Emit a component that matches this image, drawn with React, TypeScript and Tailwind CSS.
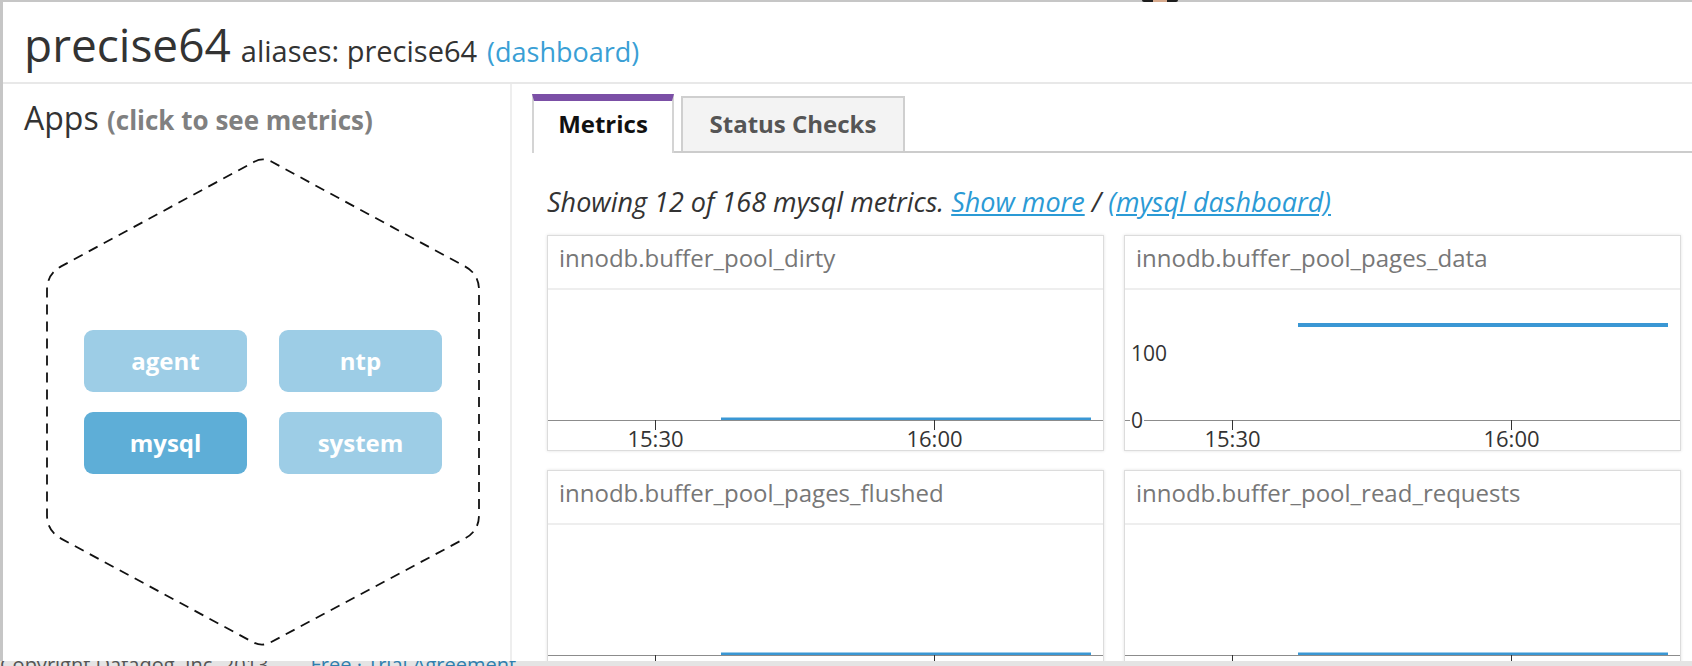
import React from "react";

type Pt = [number, number];

function roundedPoly(pts: Pt[], radii: number[]): string {
  const n = pts.length;
  let d = "";
  for (let i = 0; i < n; i++) {
    const p = pts[(i - 1 + n) % n];
    const c = pts[i];
    const nx = pts[(i + 1) % n];
    const l1 = Math.hypot(p[0] - c[0], p[1] - c[1]);
    const l2 = Math.hypot(nx[0] - c[0], nx[1] - c[1]);
    const r = radii[i];
    const a: Pt = [c[0] + ((p[0] - c[0]) / l1) * r, c[1] + ((p[1] - c[1]) / l1) * r];
    const b: Pt = [c[0] + ((nx[0] - c[0]) / l2) * r, c[1] + ((nx[1] - c[1]) / l2) * r];
    d += `${i === 0 ? "M" : "L"}${a[0].toFixed(1)} ${a[1].toFixed(1)} Q${c[0]} ${c[1]} ${b[0].toFixed(1)} ${b[1].toFixed(1)} `;
  }
  return d + "Z";
}

const HEX: Pt[] = [
  [263, 157],
  [479, 274],
  [479, 531],
  [262, 647],
  [47, 531],
  [47, 274],
];

function Hexagon() {
  return (
    <svg
      className="absolute left-0 top-0 pointer-events-none"
      width={509}
      height={577}
      viewBox="3 84 509 577"
    >
      <path
        d={roundedPoly(HEX, [10, 16, 16, 10, 16, 16])}
        fill="none"
        stroke="#111"
        strokeWidth={1.8}
        strokeDasharray="10 7"
      />
    </svg>
  );
}

function AppButton({ label, active }: { label: string; active?: boolean }) {
  return (
    <div
      className={
        "flex h-[62px] items-center justify-center rounded-[9px] text-[24px] font-bold text-white " +
        (active ? "bg-[#5eaed7]" : "bg-[#9dcde6]")
      }
    >
      {label}
    </div>
  );
}

type ChartProps = {
  title: string;
  lineY: number;
  lineW: number;
  yLabels?: boolean;
};

const SVG_FONT = "'Open Sans', sans-serif";

function Chart({ title, lineY, lineW, yLabels }: ChartProps) {
  const axis = 130;
  return (
    <div className="flex h-[216px] flex-col border border-[#dcdcdc] bg-white shadow-[0_0_3px_rgba(0,0,0,0.12)]">
      <div className="h-[54px] shrink-0 border-b-2 border-[#eeeeee] pl-[11px] pt-[7px] text-[24px] leading-[30px] text-[#777777]">
        {title}
      </div>
      <svg width={555} height={160} className="shrink-0 overflow-visible">
        <line x1={0} y1={axis + 0.5} x2={555} y2={axis + 0.5} stroke="#8c8c8c" strokeWidth={1} />
        <line x1={107.5} y1={axis} x2={107.5} y2={axis + 10} stroke="#333" strokeWidth={1} />
        <line x1={386.5} y1={axis} x2={386.5} y2={axis + 10} stroke="#333" strokeWidth={1} />
        <line x1={173} y1={lineY} x2={543} y2={lineY} stroke="#3a97d4" strokeWidth={lineW} />
        <text x={107.5} y={157} textAnchor="middle" fontSize={22} fill="#333" fontFamily={SVG_FONT}>
          15:30
        </text>
        <text x={386.5} y={157} textAnchor="middle" fontSize={22} fill="#333" fontFamily={SVG_FONT}>
          16:00
        </text>
        {yLabels && (
          <>
            <text x={6} y={71} fontSize={21} fill="#333" fontFamily={SVG_FONT}>
              100
            </text>
            <rect x={5} y={axis - 3} width={14} height={6} fill="#fff" />
            <text x={6} y={138} fontSize={21} fill="#333" fontFamily={SVG_FONT}>
              0
            </text>
          </>
        )}
      </svg>
    </div>
  );
}

export default function App() {
  return (
    <div className="relative h-[666px] w-[1692px] overflow-hidden bg-[#c6c6c6] font-['Open_Sans','Noto_Sans',sans-serif]">
      <div className="relative h-[2px] w-full">
        <div className="absolute left-[1142px] top-0 h-[2px] w-[36px] rounded-b-full bg-[#1e1e1e]">
          <div className="mx-auto h-[2px] w-[14px] bg-[#d6a98c]" />
        </div>
      </div>
      <div className="ml-[3px] flex h-[659px] flex-col overflow-hidden bg-white">
        {/* Header */}
        <div className="flex h-[82px] shrink-0 items-baseline border-b-2 border-[#e8e8e8] pl-[21px] pt-[16px] text-[#333333]">
          <span className="text-[46px] leading-[52px]">precise64</span>
          <span className="ml-[10px] text-[29px] leading-[36px]">aliases: precise64</span>
          <span className="ml-[10px] text-[27px] leading-[36px] text-[#3a9fd5]">(dashboard)</span>
        </div>
        {/* Body */}
        <div className="flex flex-1">
          {/* Left panel */}
          <div className="relative w-[509px] shrink-0 border-r-2 border-[#eeeeee]">
            <Hexagon />
            <div className="pl-[21px] pt-[14px] text-[32px] leading-[40px] text-[#333333]">
              Apps <span className="text-[26px] font-bold text-[#808080]">(click to see metrics)</span>
            </div>
            <div className="relative ml-[81px] mt-[190px] grid w-[358px] grid-cols-2 gap-x-[32px] gap-y-[20px]">
              <AppButton label="agent" />
              <AppButton label="ntp" />
              <AppButton label="mysql" active />
              <AppButton label="system" />
            </div>
          </div>
          {/* Right panel */}
          <div className="min-w-0 flex-1 pl-[20px] pt-[10px]">
            <div className="flex w-[1200px] items-end border-b-2 border-[#cccccc]">
              <div className="-mb-[2px] h-[59px] w-[142px] border-x-2 border-t-[7px] border-x-[#d4d4d4] border-t-[#7b4fa6] bg-white pt-[8px] text-center text-[24px] font-bold leading-[30px] text-[#111111]">
                Metrics
              </div>
              <div className="ml-[7px] h-[55px] w-[224px] border-x-2 border-t-2 border-[#cfcfcf] bg-[#f3f3f3] pt-[11px] text-center text-[24px] font-bold leading-[30px] text-[#555555]">
                Status Checks
              </div>
            </div>
            <div className="pl-[15px]">
              <div className="mt-[31px] whitespace-nowrap text-[27px] italic leading-[36px] text-[#333333]">
                Showing 12 of 168 mysql metrics.{" "}
                <span className="text-[#2b9ad5] underline">Show more</span> /{" "}
                <span className="text-[#2b9ad5] underline">(mysql dashboard)</span>
              </div>
              <div className="mt-[15px] grid grid-cols-[557px_557px] gap-x-[20px] gap-y-[19px]">
                <Chart title="innodb.buffer_pool_dirty" lineY={128.7} lineW={2.5} />
                <Chart title="innodb.buffer_pool_pages_data" lineY={35} lineW={4} yLabels />
                <Chart title="innodb.buffer_pool_pages_flushed" lineY={128.7} lineW={2.5} />
                <Chart title="innodb.buffer_pool_read_requests" lineY={128.7} lineW={2.5} />
              </div>
            </div>
          </div>
        </div>
      </div>
      {/* Background page footer peeking below modal */}
      <div className="h-[5px] overflow-hidden bg-[#e4e4e4]">
        <div className="-mt-[11px] flex whitespace-nowrap text-[20px] leading-[30px]">
          <span className="text-[#555555]">Copyright Datadog, Inc. 2013</span>
          <span className="ml-[42px] text-[#2f7fae]">Free · Trial Agreement</span>
        </div>
      </div>
    </div>
  );
}
